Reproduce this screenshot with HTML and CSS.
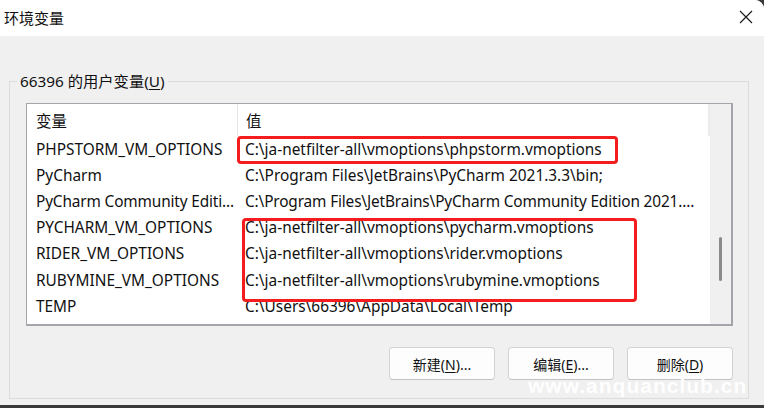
FILE: index.html
```html
<!DOCTYPE html>
<html lang="zh-CN">
<head>
<meta charset="utf-8">
<title>环境变量</title>
<link rel="stylesheet" href="styles.css">
</head>
<body>
<div class="window">
  <div class="titlebar">
    <span class="title">环境变量</span>
    <svg class="close" width="14" height="14" viewBox="0 0 14 14"><path d="M1 1 L13 13 M13 1 L1 13" stroke="#1c1c1c" stroke-width="1.2" fill="none"/></svg>
  </div>
  <fieldset class="group">
    <legend class="legend">66396 的用户变量(<u>U</u>)</legend>
    <div class="group-inner">
      <div class="list">
        <div class="data">
          <div class="row head">
            <div class="c1">变量</div>
            <div class="c2">值</div>
          </div>
          <div class="row"><div class="c1">PHPSTORM_VM_OPTIONS</div><div class="c2">C:\ja-netfilter-all\vmoptions\phpstorm.vmoptions</div></div>
          <div class="row"><div class="c1">PyCharm</div><div class="c2">C:\Program Files\JetBrains\PyCharm 2021.3.3\bin;</div></div>
          <div class="row"><div class="c1 tight">PyCharm Community Editi...</div><div class="c2 tight">C:\Program Files\JetBrains\PyCharm Community Edition 2021....</div></div>
          <div class="row"><div class="c1">PYCHARM_VM_OPTIONS</div><div class="c2">C:\ja-netfilter-all\vmoptions\pycharm.vmoptions</div></div>
          <div class="row"><div class="c1">RIDER_VM_OPTIONS</div><div class="c2">C:\ja-netfilter-all\vmoptions\rider.vmoptions</div></div>
          <div class="row"><div class="c1">RUBYMINE_VM_OPTIONS</div><div class="c2">C:\ja-netfilter-all\vmoptions\rubymine.vmoptions</div></div>
          <div class="row"><div class="c1">TEMP</div><div class="c2">C:\Users\66396\AppData\Local\Temp</div></div>
        </div>
        <div class="scrollbar"><div class="thumb"></div></div>
        <div class="mark mark1"></div>
        <div class="mark mark2"></div>
      </div>
      <div class="buttons">
        <button class="btn">新建(<u>N</u>)...</button>
        <button class="btn">编辑(<u>E</u>)...</button>
        <button class="btn">删除(<u>D</u>)</button>
      </div>
    </div>
  </fieldset>
  <div class="watermark">www.anquanclub.cn</div>
</div>
</body>
</html>
```

FILE: styles.css
```css
html {
  background: #3a3a3a;
}
body {
  margin: 0;
  font-family: "Noto Sans", "Noto Sans CJK SC", sans-serif;
  color: #111;
}
.window {
  position: relative;
  height: 405px;
  background: #f0f0f0;
  border-top-right-radius: 9px;
  overflow: hidden;
}
.titlebar {
  height: 36px;
  background: #fff;
  display: flex;
  align-items: center;
  justify-content: space-between;
  padding: 0 11px 0 4px;
}
.title {
  font-size: 15px;
  line-height: 20px;
  margin-top: -1px;
}
.close {
  margin-top: -2px;
}
.group {
  margin: 35px 0 0 9px;
  width: 740px;
  height: 328px;
  box-sizing: border-box;
  border: 1px solid #dcdcdc;
  padding: 0;
}
.legend {
  font-size: 15.3px;
  line-height: 20px;
  padding: 0 3px;
  margin-left: 7px;
}
.legend u, .btn u {
  text-decoration-thickness: 1px;
  text-underline-offset: 2px;
}
.group-inner {
  padding: 12px 15px 0 16px;
}
.list {
  position: relative;
  height: 220px;
  border: 1px solid #a4a4aa;
  border-right-width: 2px;
  border-bottom-width: 2px;
  background: #fff;
  display: flex;
}
.data {
  flex: 1;
  min-width: 0;
}
.row {
  display: flex;
  height: 26.2px;
  align-items: center;
  font-size: 15.4px;
  white-space: nowrap;
}
.row.head {
  height: 32px;
  border-right: 2px solid #ececec;
}
.c1 {
  width: 210px;
  box-sizing: border-box;
  padding-left: 9px;
  flex: none;
}
.c2 {
  flex: 1;
  padding-left: 8px;
  min-width: 0;
}
.tight {
  letter-spacing: -0.15px;
}
.head .c2 {
  align-self: stretch;
  display: flex;
  align-items: center;
  border-left: 1px solid #e5e5e5;
  padding-left: 8px;
}
.scrollbar {
  width: 21px;
  background: #f0f0f0;
  padding-top: 133px;
  display: flex;
  justify-content: center;
}
.thumb {
  width: 3px;
  height: 44px;
  background: #8a8a8a;
  border-radius: 2px;
}
.mark {
  position: absolute;
  border: 3px solid #f41c1c;
  border-radius: 4px;
  box-sizing: border-box;
}
.mark1 {
  left: 210px;
  top: 32px;
  width: 381px;
  height: 28px;
}
.mark2 {
  left: 215px;
  top: 114px;
  width: 395px;
  height: 84px;
}
.buttons {
  display: flex;
  justify-content: flex-end;
  gap: 13px;
  margin-top: 21px;
}
.btn {
  width: 106px;
  height: 33px;
  background: #fdfdfd;
  border: 1px solid #d3d3d3;
  border-bottom-color: #c2c2c2;
  border-radius: 4px;
  font-family: "Noto Sans", "Noto Sans CJK SC", sans-serif;
  font-size: 14px;
  color: #111;
  padding: 0;
}
.watermark {
  position: absolute;
  left: 528px;
  top: 374px;
  font-family: "Liberation Sans", sans-serif;
  font-weight: bold;
  font-size: 21px;
  letter-spacing: 1px;
  color: rgba(255, 255, 255, 0.95);
}
```
